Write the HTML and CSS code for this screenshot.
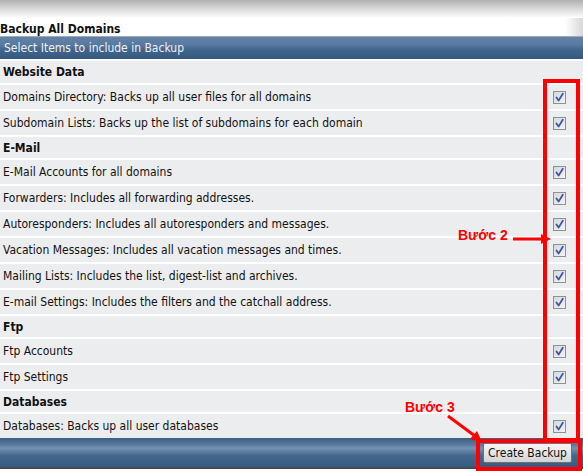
FILE: index.html
```html
<!DOCTYPE html>
<html>
<head>
<meta charset="utf-8">
<link rel="stylesheet" href="styles.css">
</head>
<body>
<div class="page">
  <div class="top">
    <div class="shade"></div>
    <div class="title">Backup All Domains</div>
  </div>
  <div class="panel">
    <div class="bar">Select Items to include in Backup</div>
    <div class="row head first">Website Data</div>
    <div class="row"><span>Domains Directory: Backs up all user files for all domains</span><span class="cb"><svg viewBox="0 0 11 11"><path d="M2.5 5.5 L4.6 8.6 L8.8 1.8" /></svg></span></div>
    <div class="row"><span>Subdomain Lists: Backs up the list of subdomains for each domain</span><span class="cb"><svg viewBox="0 0 11 11"><path d="M2.5 5.5 L4.6 8.6 L8.8 1.8" /></svg></span></div>
    <div class="row head">E-Mail</div>
    <div class="row"><span>E-Mail Accounts for all domains</span><span class="cb"><svg viewBox="0 0 11 11"><path d="M2.5 5.5 L4.6 8.6 L8.8 1.8" /></svg></span></div>
    <div class="row"><span>Forwarders: Includes all forwarding addresses.</span><span class="cb"><svg viewBox="0 0 11 11"><path d="M2.5 5.5 L4.6 8.6 L8.8 1.8" /></svg></span></div>
    <div class="row"><span>Autoresponders: Includes all autoresponders and messages.</span><span class="cb"><svg viewBox="0 0 11 11"><path d="M2.5 5.5 L4.6 8.6 L8.8 1.8" /></svg></span></div>
    <div class="row"><span>Vacation Messages: Includes all vacation messages and times.</span><span class="cb"><svg viewBox="0 0 11 11"><path d="M2.5 5.5 L4.6 8.6 L8.8 1.8" /></svg></span></div>
    <div class="row"><span>Mailing Lists: Includes the list, digest-list and archives.</span><span class="cb"><svg viewBox="0 0 11 11"><path d="M2.5 5.5 L4.6 8.6 L8.8 1.8" /></svg></span></div>
    <div class="row"><span>E-mail Settings: Includes the filters and the catchall address.</span><span class="cb"><svg viewBox="0 0 11 11"><path d="M2.5 5.5 L4.6 8.6 L8.8 1.8" /></svg></span></div>
    <div class="row head">Ftp</div>
    <div class="row"><span>Ftp Accounts</span><span class="cb"><svg viewBox="0 0 11 11"><path d="M2.5 5.5 L4.6 8.6 L8.8 1.8" /></svg></span></div>
    <div class="row"><span>Ftp Settings</span><span class="cb"><svg viewBox="0 0 11 11"><path d="M2.5 5.5 L4.6 8.6 L8.8 1.8" /></svg></span></div>
    <div class="row head">Databases</div>
    <div class="row"><span>Databases: Backs up all user databases</span><span class="cb"><svg viewBox="0 0 11 11"><path d="M2.5 5.5 L4.6 8.6 L8.8 1.8" /></svg></span></div>
    <div class="foot"><button class="btn">Create Backup</button></div>
  </div>

  <div class="mark mark-cb"></div>
  <div class="mark mark-btn"></div>
  <div class="note note2">Bước 2</div>
  <div class="note note3">Bước 3</div>
  <svg class="arrow arrow2" viewBox="0 0 40 12"><path d="M0 6 H30" /><polygon points="28,1 38,6 28,11" /></svg>
  <svg class="arrow arrow3" viewBox="0 0 40 30"><path d="M2 2 L29 22" /><polygon points="24,25 36,28 31,17" /></svg>
</div>
</body>
</html>
```
FILE: styles.css
```css
html, body {
  margin: 0;
  padding: 0;
  background: #ffffff;
}
.page {
  position: relative;
  width: 583px;
  height: 472px;
  overflow: hidden;
  font-family: "DejaVu Sans Condensed", "DejaVu Sans", sans-serif;
  font-size: 12px;
  color: #111;
}
.top {
  height: 36px;
  background: linear-gradient(to right, rgba(255,255,255,0) 565px, #d8d8d8 583px);
}
.shade {
  height: 18px;
  background: linear-gradient(#b0b0b0, #e2e2e2 60%, #ffffff);
}
.title {
  height: 18px;
  line-height: 22px;
  font-weight: bold;
}
.panel {
  background: #ecedef;
}
.bar {
  height: 22px;
  line-height: 22px;
  padding-left: 4px;
  color: #eef2f7;
  border-top: 1px solid #9aa9bb;
  background: linear-gradient(#6381a6 0%, #587aa0 35%, #41648b 60%, #355980 100%);
}
.row {
  display: flex;
  align-items: center;
  justify-content: space-between;
  height: 24px;
  border-top: 2px solid #ffffff;
  padding-left: 3px;
  padding-right: 17px;
}
.row.head {
  height: 21px;
  font-weight: bold;
}
.row.head.first {
  height: 22px;
}
.cb {
  display: block;
  width: 11px;
  height: 11px;
  border: 1px solid #8f9092;
  background: linear-gradient(135deg, #d6d7d9, #f4f4f5);
}
.cb svg {
  display: block;
  width: 11px;
  height: 11px;
}
.cb path {
  fill: none;
  stroke: #3c56a3;
  stroke-width: 1.8;
  stroke-linecap: round;
  stroke-linejoin: round;
}
.foot {
  display: flex;
  justify-content: flex-end;
  align-items: center;
  height: 29px;
  padding-right: 11px;
  border-bottom: 2px solid #4a4a4a;
  background: linear-gradient(#3b5e86 0%, #5d7ca1 25%, #7591b3 35%, #45688f 60%, #365a81 100%);
}
.btn {
  font-family: "DejaVu Sans Condensed", "DejaVu Sans", sans-serif;
  font-size: 12px;
  color: #111;
  height: 20px;
  width: 89px;
  padding: 0;
  border: 1px solid #707070;
  border-radius: 2px;
  background: linear-gradient(#f6f6f6, #e6e6e6 50%, #d2d2d2);
}
.mark {
  position: absolute;
  border: 4.5px solid #ff0000;
  box-sizing: border-box;
}
.mark-cb {
  left: 543px;
  top: 79px;
  width: 37px;
  height: 363px;
}
.mark-btn {
  left: 476px;
  top: 439px;
  width: 106px;
  height: 32px;
}
.note {
  position: absolute;
  font-family: "Liberation Sans", Arial, sans-serif;
  font-weight: bold;
  font-size: 14px;
  color: #ff0000;
  line-height: 14px;
}
.note2 {
  left: 458px;
  top: 228px;
}
.note3 {
  left: 405px;
  top: 400px;
}
.arrow {
  position: absolute;
  overflow: visible;
}
.arrow path {
  stroke: #ff0000;
  stroke-width: 3;
  fill: none;
}
.arrow polygon {
  fill: #ff0000;
}
.arrow2 {
  left: 513px;
  top: 233px;
  width: 40px;
  height: 12px;
}
.arrow3 {
  left: 446px;
  top: 414px;
  width: 40px;
  height: 30px;
}
```
